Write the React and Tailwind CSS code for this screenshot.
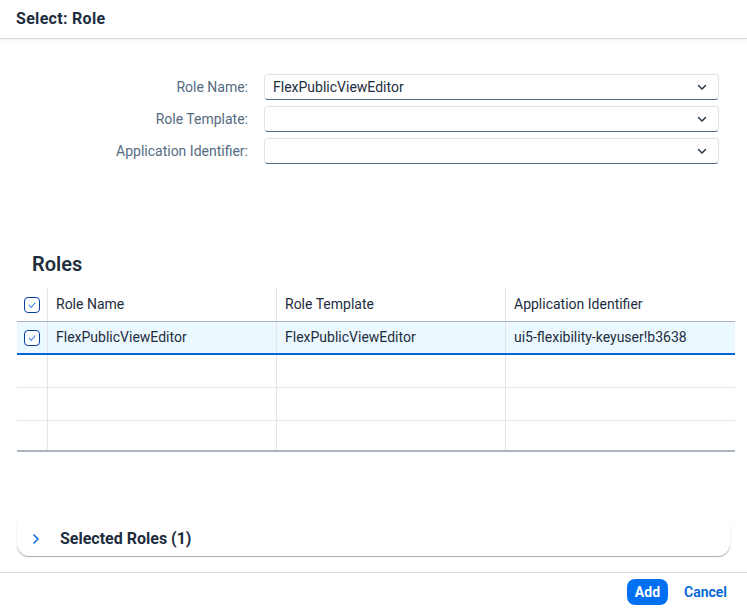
import React from "react";

const Chevron = () => (
  <svg width="12" height="12" viewBox="0 0 12 12" fill="none">
    <path d="M2.5 4.5 L6 8 L9.5 4.5" stroke="#1d2d3e" strokeWidth="1.4" strokeLinecap="round" strokeLinejoin="round" />
  </svg>
);

const Check = () => (
  <div className="w-[16px] h-[16px] rounded-[4px] border border-[#0a3fa8] flex items-center justify-center bg-white">
    <svg width="10" height="10" viewBox="0 0 10 10" fill="none">
      <path d="M2 5.2 L4.2 7.3 L8 2.8" stroke="#4a90e8" strokeWidth="1.1" strokeLinecap="round" strokeLinejoin="round" />
    </svg>
  </div>
);

function Field({ label, value }) {
  return (
    <div className="flex items-center h-[26px]">
      <div className="w-[248px] text-right text-[14px] text-[#556b82] pr-0">{label}</div>
      <div className="ml-[16px] w-[455px] h-[26px] bg-white rounded-[4px] border border-[#dfe3e8] border-b-[#556b82] flex items-center pl-[8px] pr-[10px] text-[14px] text-[#1d2d3e]">
        <span className="flex-1">{value}</span>
        <Chevron />
      </div>
    </div>
  );
}

const cols = ["w-[31px]", "w-[229px]", "w-[229px]", "flex-1"];

function Row({ cells, selected, last }) {
  return (
    <div
      className={
        "flex " +
        (selected
          ? "h-[33px] bg-[#ebf8ff] border-b-2 border-[#0064d9]"
          : last
          ? "h-[29px]"
          : "h-[33px] border-b border-[#e5e5e5]")
      }
    >
      {cells.map((c, i) => (
        <div
          key={i}
          className={
            cols[i] +
            " flex items-center " +
            (i === 0 ? "justify-center " : "pl-[8px] ") +
            (i < 3 ? "border-r border-[#e5e5e5]" : "")
          }
        >
          {c}
        </div>
      ))}
    </div>
  );
}

export default function App() {
  return (
    <div
      className="w-[747px] h-[610px] bg-white flex flex-col text-[#1d2d3e] overflow-hidden"
      style={{ fontFamily: "Roboto, 'Noto Sans', sans-serif" }}
    >
      <div className="h-[39px] flex items-center pl-[16px] border-b border-[#d9d9d9] shadow-[0_1px_2px_rgba(34,53,72,0.08)]">
        <span className="text-[16px] font-bold tracking-[0.3px] text-[#1d2d3e]">Select: Role</span>
      </div>

      <div className="pt-[35px] flex flex-col gap-[6px]">
        <Field label="Role Name:" value="FlexPublicViewEditor" />
        <Field label="Role Template:" value="" />
        <Field label="Application Identifier:" value="" />
      </div>

      <div className="pl-[32px] mt-[88px] h-[24px] flex items-center text-[20px] font-semibold text-[#1d2d3e]">Roles</div>

      <div className="mx-[17px] mt-[12px] w-[718px] text-[14px]">
        <div className="flex h-[34px] border-b border-[#a9b4be]">
          <div className="w-[31px] flex items-center justify-center border-r border-[#e5e5e5]"><Check /></div>
          <div className="w-[229px] flex items-center pl-[8px] border-r border-[#e5e5e5] text-[#1d2d3e]">Role Name</div>
          <div className="w-[229px] flex items-center pl-[8px] border-r border-[#e5e5e5] text-[#1d2d3e]">Role Template</div>
          <div className="flex-1 flex items-center pl-[8px] text-[#1d2d3e]">Application Identifier</div>
        </div>
        <Row selected cells={[<Check key="c" />, "FlexPublicViewEditor", "FlexPublicViewEditor", "ui5-flexibility-keyuser!b3638"]} />
        <Row cells={["", "", "", ""]} />
        <Row cells={["", "", "", ""]} />
        <Row last cells={["", "", "", ""]} />
        <div className="h-[2px] bg-[#a9b4be]" />
      </div>

      <div className="mx-[17px] mt-[70px] h-[34px] rounded-b-[12px] shadow-[0_1px_0_#a9b4be,0_1px_2px_rgba(34,53,72,0.15)] flex items-center">
        <svg className="ml-[14px]" width="10" height="12" viewBox="0 0 10 12" fill="none">
          <path d="M3 2 L7 6 L3 10" stroke="#0064d9" strokeWidth="1.5" strokeLinecap="round" strokeLinejoin="round" />
        </svg>
        <span className="ml-[19px] text-[16px] font-bold text-[#1d2d3e]">Selected Roles (1)</span>
      </div>

      <div className="mt-auto h-[38px] border-t border-[#d9d9d9] flex items-center justify-end pr-[12px] gap-[8px]">
        <button className="h-[26px] mt-[1px] px-[8px] rounded-[8px] bg-[#0070f2] text-white text-[14px] font-bold">Add</button>
        <button className="h-[26px] mt-[1px] px-[8px] rounded-[8px] text-[#0064d9] text-[14px] font-semibold">Cancel</button>
      </div>
    </div>
  );
}
